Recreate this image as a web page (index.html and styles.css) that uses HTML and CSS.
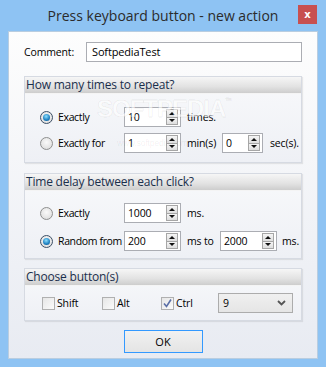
FILE: index.html
```html
<!DOCTYPE html>
<html lang="en">
<head>
    <meta charset="UTF-8">
    <title>Press keyboard button - new action</title>
    <link rel="stylesheet" href="styles.css">
</head>
<body>
    <div class="window">
        <div class="titlebar">
            <span class="title">Press keyboard button - new action</span>
            <span class="close">x</span>
        </div>
        <div class="client">
            <div class="comment-row">
                <span class="comment-label">Comment:</span>
                <div class="textbox">SoftpediaTest</div>
            </div>

            <div class="group g-repeat">
                <div class="group-head">How many times to repeat?</div>
                <div class="group-body">
                    <div class="row">
                        <span class="radio checked"></span>
                        <span class="lbl">Exactly</span>
                        <span class="spin"><span class="val">10</span><span class="arrows"><i class="up"></i><i class="down"></i></span></span>
                        <span class="unit">times.</span>
                    </div>
                    <div class="row">
                        <span class="radio"></span>
                        <span class="lbl">Exactly for</span>
                        <span class="spin"><span class="val">1</span><span class="arrows"><i class="up"></i><i class="down"></i></span></span>
                        <span class="unit u-min">min(s)</span>
                        <span class="spin narrow"><span class="val">0</span><span class="arrows"><i class="up"></i><i class="down"></i></span></span>
                        <span class="unit u-sec">sec(s).</span>
                    </div>
                </div>
                <div class="watermark">SOFTPEDIA<sup>™</sup></div>
                <div class="watermark-url">www.softpedia.com</div>
            </div>

            <div class="group g-delay">
                <div class="group-head">Time delay between each click?</div>
                <div class="group-body">
                    <div class="row">
                        <span class="radio"></span>
                        <span class="lbl">Exactly</span>
                        <span class="spin"><span class="val">1000</span><span class="arrows"><i class="up"></i><i class="down"></i></span></span>
                        <span class="unit">ms.</span>
                    </div>
                    <div class="row">
                        <span class="radio checked"></span>
                        <span class="lbl">Random from</span>
                        <span class="spin"><span class="val">200</span><span class="arrows"><i class="up"></i><i class="down"></i></span></span>
                        <span class="unit u-to">ms to</span>
                        <span class="spin"><span class="val">2000</span><span class="arrows"><i class="up"></i><i class="down"></i></span></span>
                        <span class="unit u-ms">ms.</span>
                    </div>
                </div>
            </div>

            <div class="group g-buttons">
                <div class="group-head">Choose button(s)</div>
                <div class="group-body">
                    <div class="row">
                        <span class="check-item i-shift"><span class="checkbox"></span>Shift</span>
                        <span class="check-item i-alt"><span class="checkbox"></span>Alt</span>
                        <span class="check-item i-ctrl"><span class="checkbox checked">
                            <svg width="11" height="11" viewBox="0 0 11 11"><path d="M2 5.5 L4.5 8.5 L9 1.5" fill="none" stroke="#5b6fa6" stroke-width="1.6"/></svg>
                        </span>Ctrl</span>
                        <span class="select">
                            <span class="val">9</span>
                            <svg width="9" height="6" viewBox="0 0 9 6"><path d="M1 1 L4.5 4.5 L8 1" fill="none" stroke="#555" stroke-width="1.8"/></svg>
                        </span>
                    </div>
                </div>
            </div>

            <div class="actions">
                <button class="ok">OK</button>
            </div>
        </div>
    </div>
</body>
</html>
```

FILE: styles.css
```css
body {
    margin: 0;
    width: 326px;
    height: 367px;
    overflow: hidden;
    font-family: "Open Sans", sans-serif;
    font-size: 10.5px;
    letter-spacing: -0.15px;
    color: #000;
}
.window {
    height: 367px;
    box-sizing: border-box;
    padding: 0 8px 8px;
    background: #8ec3f3;
    display: flex;
    flex-direction: column;
}
.titlebar {
    height: 31px;
    position: relative;
    display: flex;
    align-items: center;
    justify-content: center;
}
.title {
    font-size: 14px;
    letter-spacing: 0;
    color: #2b2b2b;
    margin-top: -1px;
}
.close {
    position: absolute;
    right: 1px;
    top: 5px;
    width: 19px;
    height: 19px;
    background: #c75050;
    color: #fff;
    font: bold 10px "DejaVu Sans", sans-serif;
    display: flex;
    align-items: center;
    justify-content: center;
}
.client {
    flex: 1;
    position: relative;
    border: 1px solid #b9cde0;
    background: linear-gradient(#fdfdfd, #e8ebf2);
    padding: 10px 15px 0;
}
.comment-row {
    display: flex;
    align-items: center;
    height: 20px;
}
.comment-label {
    width: 62px;
}
.textbox {
    width: 216px;
    height: 20px;
    box-sizing: border-box;
    border: 1px solid #abadb3;
    background: #fff;
    padding: 1px 5px;
    line-height: 16px;
    font-size: 11px;
}
.group {
    position: relative;
    border: 1px solid #d6dae2;
    background: linear-gradient(#f8f9fb, #eef0f5);
    box-shadow: 1px 1px 1px rgba(0,0,0,0.08);
}
.g-repeat {
    margin-top: 14px;
}
.g-delay {
    margin-top: 10px;
}
.g-buttons {
    margin-top: 9px;
}
.group-head {
    height: 16px;
    line-height: 15px;
    padding-left: 1px;
    font-size: 12px;
    letter-spacing: -0.2px;
    color: #1a2f4c;
    background: linear-gradient(#f6f6f6, #e2e2e2 60%, #cdcdcd);
    border-bottom: 1px solid #f4f4f4;
}
.group-body {
    display: flex;
    flex-direction: column;
    padding-left: 15px;
}
.g-repeat .group-body {
    padding-top: 13px;
    padding-bottom: 9px;
    gap: 6px;
}
.g-delay .group-body {
    padding-top: 12px;
    padding-bottom: 7px;
    gap: 8px;
}
.g-buttons .group-body {
    padding: 7px 0 7px 17px;
}
.row {
    display: flex;
    align-items: center;
    height: 20px;
}
.radio {
    width: 13px;
    height: 13px;
    box-sizing: border-box;
    border-radius: 50%;
    border: 1px solid #8e8f8f;
    background: radial-gradient(circle at 50% 40%, #fafafa, #d8d8d8);
    margin-right: 5px;
    display: flex;
    align-items: center;
    justify-content: center;
}
.radio.checked {
    border-color: #3c4f66;
}
.radio.checked::after {
    content: "";
    width: 7px;
    height: 7px;
    border-radius: 50%;
    background: radial-gradient(circle at 45% 35%, #8ee0ff, #1c7fc0 60%, #0f4d85);
}
.lbl {
    width: 66px;
    white-space: nowrap;
    letter-spacing: -0.35px;
}
.spin {
    width: 57px;
    height: 20px;
    box-sizing: border-box;
    border: 1px solid #abadb3;
    background: #fff;
    display: flex;
    align-items: center;
    padding-left: 3px;
}
.spin.narrow {
    width: 41px;
}
.spin .val {
    flex: 1;
}
.arrows {
    width: 12px;
    height: 16px;
    margin-right: 2px;
    display: flex;
    flex-direction: column;
}
.arrows i {
    flex: 1;
    border: 1px solid #a6a6a6;
    background: linear-gradient(#f5f5f5, #dedede);
    display: flex;
    align-items: center;
    justify-content: center;
}
.arrows i + i {
    margin-top: -1px;
}
.arrows .up::after {
    content: "";
    border-left: 3px solid transparent;
    border-right: 3px solid transparent;
    border-bottom: 3px solid #111;
}
.arrows .down::after {
    content: "";
    border-left: 3px solid transparent;
    border-right: 3px solid transparent;
    border-top: 3px solid #111;
}
.unit {
    margin-left: 6px;
}
.u-min {
    width: 35px;
}
.u-sec {
    margin-left: 7px;
}
.u-to {
    width: 33px;
}
.u-ms {
    margin-left: 5px;
}
.check-item {
    display: flex;
    align-items: center;
}
.i-shift {
    width: 60px;
}
.i-alt {
    width: 59px;
}
.i-ctrl {
    width: 57px;
}
.checkbox {
    width: 13px;
    height: 13px;
    box-sizing: border-box;
    border: 1px solid #b0b0b0;
    background: linear-gradient(135deg, #e6e6e6, #fbfbfb);
    margin-right: 2px;
    display: flex;
    align-items: center;
    justify-content: center;
}
.select {
    width: 75px;
    height: 20px;
    box-sizing: border-box;
    border: 1px solid #acacac;
    background: linear-gradient(#f0f0f0, #e5e5e5);
    display: flex;
    align-items: center;
    justify-content: space-between;
    padding: 0 6px 0 4px;
}
.actions {
    display: flex;
    justify-content: center;
    margin-top: 9px;
}
.ok {
    width: 79px;
    height: 23px;
    border: 1px solid #3399ff;
    background: linear-gradient(#f1f1f1, #e4e4e4);
    font-family: "Open Sans", sans-serif;
    font-size: 11px;
    color: #000;
    padding: 0;
}
.watermark {
    position: absolute;
    left: 72px;
    top: 20px;
    font: bold 24px/1 "Liberation Sans", sans-serif;
    letter-spacing: -1px;
    color: rgba(255,255,255,0.6);
    -webkit-text-stroke: 1px rgba(0,0,0,0.06);
    pointer-events: none;
}
.watermark sup {
    font-size: 7px;
    vertical-align: top;
}
.watermark-url {
    position: absolute;
    left: 92px;
    top: 61px;
    font: 8.5px "Liberation Sans", sans-serif;
    color: rgba(0,0,0,0.07);
    pointer-events: none;
}
```
